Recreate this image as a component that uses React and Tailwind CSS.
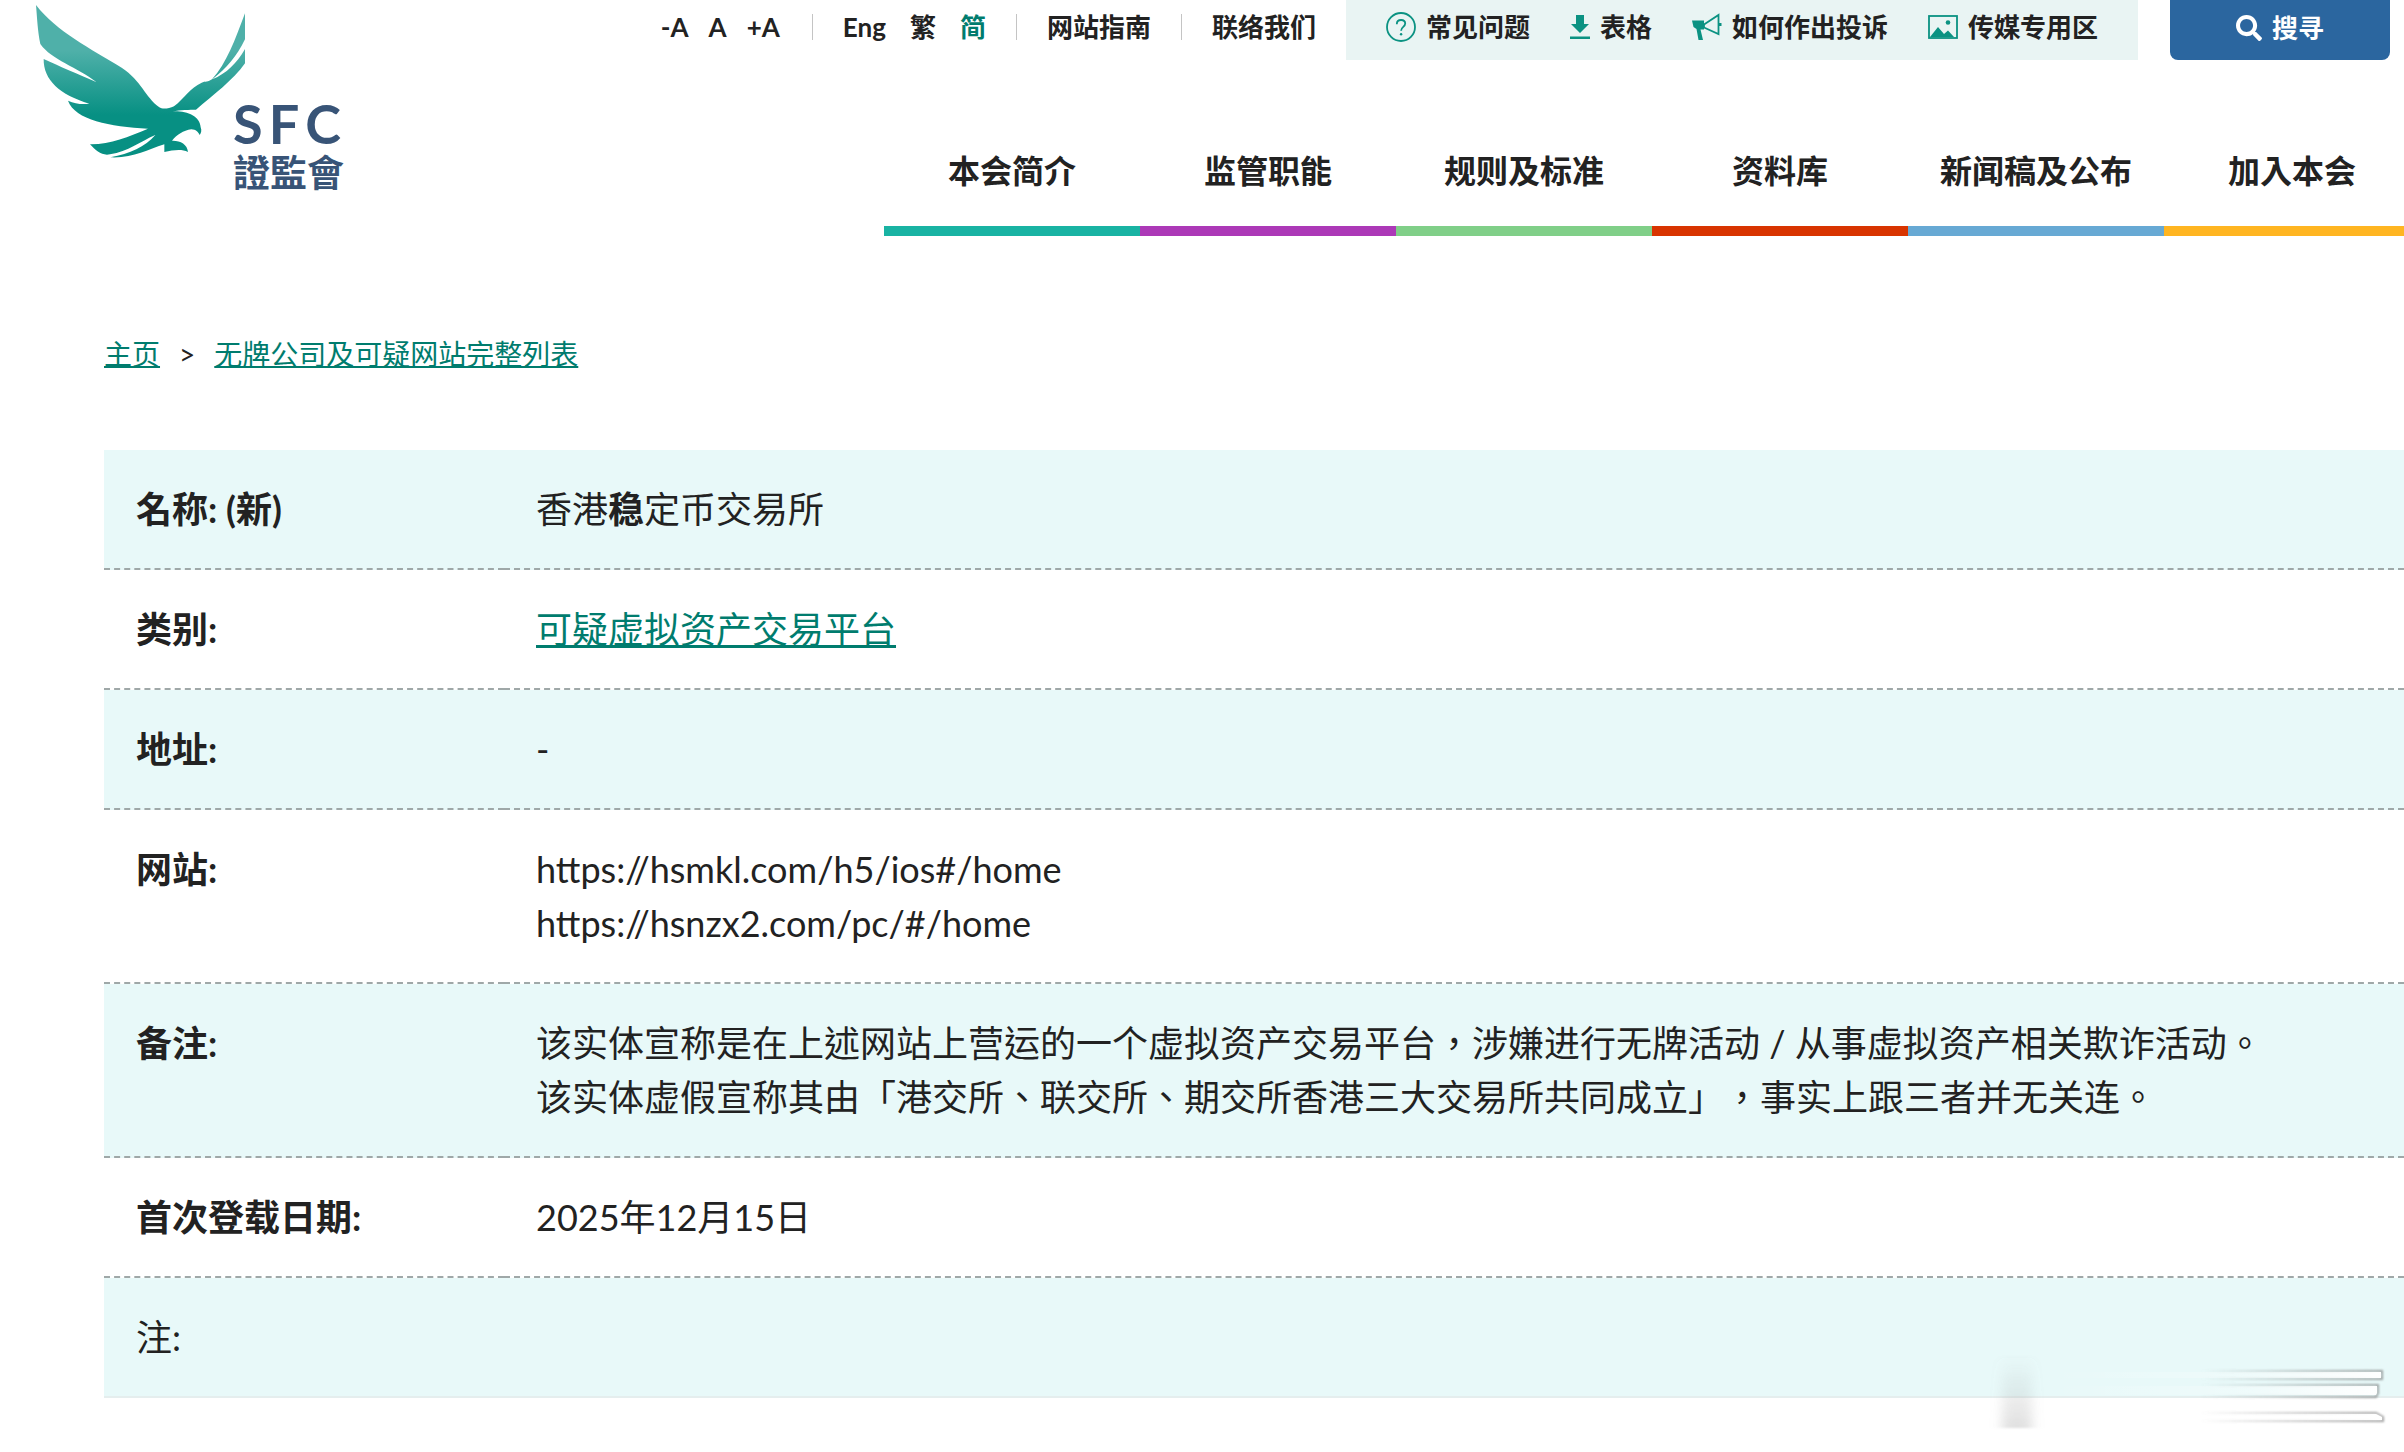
import { FaSearch } from 'react-icons/fa';

const textSizes = ['-A', 'A', '+A'];

const languages = [
  { label: 'Eng', active: false },
  { label: '繁', active: false },
  { label: '简', active: true }
];

const QuestionIcon = () => (
  <svg width="30" height="30" viewBox="0 0 30 30" fill="none" stroke="#0b9282" aria-hidden="true">
    <circle cx="15" cy="15" r="14" strokeWidth="1.8" />
    <path
      d="M10.800 12.200c0-2.600 1.800-4.200 4.300-4.200 2.400 0 4.100 1.400 4.100 3.600 0 3.400-4.100 3.300-4.100 7.200"
      strokeWidth="1.8"
    />
    <circle cx="15.1" cy="22.3" r="1.2" fill="#0b9282" stroke="none" />
  </svg>
);

const DownloadIcon = () => (
  <svg width="20" height="24" viewBox="0 0 20 24" fill="#0b9282" aria-hidden="true">
    <path d="M6 0h8v9h5l-9 9-9-9h5zM0 21.500h20V24H0z" />
  </svg>
);

const MegaphoneIcon = () => (
  <svg width="30" height="28" viewBox="0 0 30 28" aria-hidden="true">
    <path d="M0 7.500h12v9H8.500l2.500 10.500H6.500L4.500 16 1.500 14z" fill="#0b9282" />
    <path d="M12 11.500 26.500 2v19L12 14.500z" fill="none" stroke="#0b9282" strokeWidth="1.8" />
    <path d="M27 10h2.500v3H27z" fill="#0b9282" />
  </svg>
);

const PictureIcon = () => (
  <svg width="30" height="24" viewBox="0 0 30 24" aria-hidden="true">
    <rect x="1" y="1" width="28" height="22" fill="none" stroke="#0b9282" strokeWidth="1.8" />
    <path d="M2 22l8-10 6 7 4-3.500L26 22z" fill="#0b9282" />
    <circle cx="20" cy="7.500" r="2.300" fill="#0b9282" />
  </svg>
);

const quickLinks = [
  { label: '常见问题', icon: QuestionIcon },
  { label: '表格', icon: DownloadIcon },
  { label: '如何作出投诉', icon: MegaphoneIcon },
  { label: '传媒专用区', icon: PictureIcon }
];

const navItems = [
  { label: '本会简介', border: 'border-[#19b3a3]' },
  { label: '监管职能', border: 'border-[#ac39b7]' },
  { label: '规则及标准', border: 'border-[#80cf88]' },
  { label: '资料库', border: 'border-[#d83400]' },
  { label: '新闻稿及公布', border: 'border-[#67a9d4]' },
  { label: '加入本会', border: 'border-[#ffb521]' }
];

const Logo = () => (
  <a href="#home" className="relative block w-[360px] h-[200px] shrink-0 text-[#385477]" aria-label="SFC 證監會">
    <svg width="360" height="200" viewBox="0 0 1080 600" aria-hidden="true">
      <defs>
        <linearGradient id="wing" x1="0" y1="0" x2="0" y2="1">
          <stop offset="0" stopColor="#4fb0a9" />
          <stop offset="0.3" stopColor="#4fb0a9" />
          <stop offset="0.72" stopColor="#079083" />
          <stop offset="1" stopColor="#079083" />
        </linearGradient>
      </defs>
      <path
        d="M108 15C170 95 270 145 365 203C425 243 435 290 478 322C486 328 505 327 522 319C555 293 570 264 605 248C615 244 625 246 636 238C680 190 705 120 735 40V118C710 170 680 205 637 238C680 220 710 190 735 147V190C700 240 640 285 588 329C570 329 540 330 518 334C560 332 600 347 602 382C606 392 603 400 599 405C594 395 588 389 574 388C550 392 530 404 516 422C540 421 562 432 564 456C545 446 520 450 493 456V433C440 450 400 475 331 472C390 461 435 440 466 405C420 425 385 454 330 463C305 468 288 452 270 433C330 434 385 410 444 386C330 380 225 360 204 302C225 311 245 314 268 311C180 285 130 240 131 177C180 200 230 220 290 247C230 200 155 180 121 132C113 95 111 50 108 15Z"
        fill="url(#wing)"
      />
    </svg>
    <div className="absolute left-[233px] top-24 flex flex-col font-bold">
      <span className="flex gap-1.5 text-[54px] leading-[56px]">
        <span>S</span>
        <span>F</span>
        <span>C</span>
      </span>
      <span className="text-[37px] leading-[42px]">證監會</span>
    </div>
  </a>
);

const Divider = () => <span className="w-px h-[26px] bg-[#c4c4c4]" />;

const TopBar = () => (
  <div className="flex justify-end h-[60px] pr-[14px] font-bold text-[26px] leading-8">
    <div className="flex items-center pb-1.5">
      <div className="flex gap-5">
        {textSizes.map((size) => (
          <button key={size} type="button">
            {size}
          </button>
        ))}
      </div>
      <div className="flex items-center gap-[30px] ml-8">
        <Divider />
        <div className="flex gap-6">
          {languages.map(({ label, active }) => (
            <a key={label} href="#lang" className={active ? 'text-[#007c6e]' : ''}>
              {label}
            </a>
          ))}
        </div>
        <Divider />
        <a href="#sitemap">网站指南</a>
        <Divider />
        <a href="#contact">联络我们</a>
      </div>
    </div>
    <div className="flex items-center gap-10 ml-[30px] px-10 pb-1.5 bg-[#e9f4f3]">
      {quickLinks.map(({ label, icon: Icon }) => (
        <a key={label} href="#quick" className="flex items-center gap-2.5">
          <Icon />
          <span>{label}</span>
        </a>
      ))}
    </div>
    <button
      type="button"
      className="flex items-center justify-center gap-2.5 w-[220px] ml-8 pb-1 rounded-b-lg bg-[#2b669f] text-white"
    >
      <FaSearch size={26} />
      <span>搜寻</span>
    </button>
  </div>
);

const MainNav = () => (
  <nav className="flex justify-end -mr-4 mt-[87px] font-bold text-[32px] leading-[48px]">
    {navItems.map(({ label, border }) => (
      <a key={label} href="#nav" className={`w-64 pb-[31px] text-center border-b-[10px] ${border}`}>
        {label}
      </a>
    ))}
  </nav>
);

const Breadcrumb = () => (
  <nav className="flex items-center gap-[19px] mt-[97px] ml-[104px] text-[28px] leading-[42px]">
    <a href="#home" className="underline decoration-2 text-[#007c6e]">主页</a>
    <span>&gt;</span>
    <a href="#alerts" className="underline decoration-2 text-[#007c6e]">无牌公司及可疑网站完整列表</a>
  </nav>
);

const rows = [
  {
    label: '名称: (新)',
    value: (
      <>
        香港<b>稳</b>定币交易所
      </>
    )
  },
  {
    label: '类别:',
    value: (
      <a href="#category" className="underline decoration-3 text-[#007c6e]">
        可疑虚拟资产交易平台
      </a>
    )
  },
  { label: '地址:', value: '-' },
  {
    label: '网站:',
    value: (
      <>
        https://hsmkl.com/h5/ios#/home
        <br />
        https://hsnzx2.com/pc/#/home
      </>
    )
  },
  {
    label: '备注:',
    value: (
      <>
        该实体宣称是在上述网站上营运的一个虚拟资产交易平台，涉嫌进行无牌活动 / 从事虚拟资产相关欺诈活动。
        <br />
        该实体虚假宣称其由「港交所、联交所、期交所香港三大交易所共同成立」，事实上跟三者并无关连。
      </>
    )
  },
  { label: '首次登载日期:', value: '2025年12月15日' }
];

const DetailTable = () => (
  <table className="w-full mt-[75px] border-separate border-spacing-0 text-[36px] leading-[54px] [text-spacing-trim:space-all]">
    <tbody>
      {rows.map(({ label, value }) => (
        <tr key={label} className="odd:bg-[#e8f9f9]">
          <th
            scope="row"
            className="w-[400px] px-8 py-8 text-left align-top font-bold border-b-2 border-dashed border-[#9fa8a8]"
          >
            {label}
          </th>
          <td className="px-8 py-8 align-top border-b-2 border-dashed border-[#9fa8a8]">{value}</td>
        </tr>
      ))}
      <tr className="odd:bg-[#e8f9f9]">
        <td colSpan={2} className="px-8 py-8 border-b-2 border-[#e5eeee]">
          注:
        </td>
      </tr>
    </tbody>
  </table>
);

// Faded corner mark, laid over the end of the table
const CornerMark = () => (
  <svg
    className="absolute right-0 bottom-0 pointer-events-none"
    width="504"
    height="122"
    viewBox="0 0 504 122"
    aria-hidden="true"
  >
    <defs>
      <linearGradient id="streak" gradientUnits="userSpaceOnUse" x1="150" y1="0" x2="480" y2="0">
        <stop offset="0" stopColor="#fff" stopOpacity="0" />
        <stop offset="0.6" stopColor="#fff" stopOpacity="0.3" />
        <stop offset="1" stopColor="#fff" />
      </linearGradient>
      <linearGradient id="edge" gradientUnits="userSpaceOnUse" x1="300" y1="0" x2="480" y2="0">
        <stop offset="0" stopColor="#777" stopOpacity="0" />
        <stop offset="1" stopColor="#777" stopOpacity="0.7" />
      </linearGradient>
      <linearGradient id="fade" x1="0" y1="0" x2="0" y2="1">
        <stop offset="0" stopColor="#999" stopOpacity="0" />
        <stop offset="1" stopColor="#999" stopOpacity="0.3" />
      </linearGradient>
      <filter id="soft" x="-100%" y="-20%" width="300%" height="140%">
        <feGaussianBlur stdDeviation="6 1" />
      </filter>
      <filter id="thin" x="-5%" y="-20%" width="110%" height="140%">
        <feGaussianBlur stdDeviation="0.8" />
      </filter>
    </defs>
    <rect x="102" y="25" width="30" height="73" fill="url(#fade)" filter="url(#soft)" />
    <g filter="url(#thin)" fill="none" stroke="url(#edge)" strokeWidth="2">
      <path d="M150 41L482 41V49L150 49z" />
      <path d="M150 55L478 55V63L476 67L150 66z" />
      <path d="M150 83L476 83L483 87V91L150 91z" />
    </g>
    <g fill="url(#streak)">
      <path d="M150 42L481 42V48L150 48z" />
      <path d="M150 56L477 56V63L476 65L150 65z" />
      <path d="M150 84L476 84L482 87V90L150 90z" />
    </g>
  </svg>
);

const App = () => (
  <div
    lang="zh-HK"
    className="relative min-h-screen overflow-hidden bg-white text-[#222] font-['Lato','Noto_Sans_CJK_TC',sans-serif]"
  >
    <header className="flex">
      <Logo />
      <div className="flex-1">
        <TopBar />
        <MainNav />
      </div>
    </header>
    <main>
      <Breadcrumb />
      <div className="ml-[104px]">
        <DetailTable />
      </div>
    </main>
    <CornerMark />
  </div>
);

export default App;
